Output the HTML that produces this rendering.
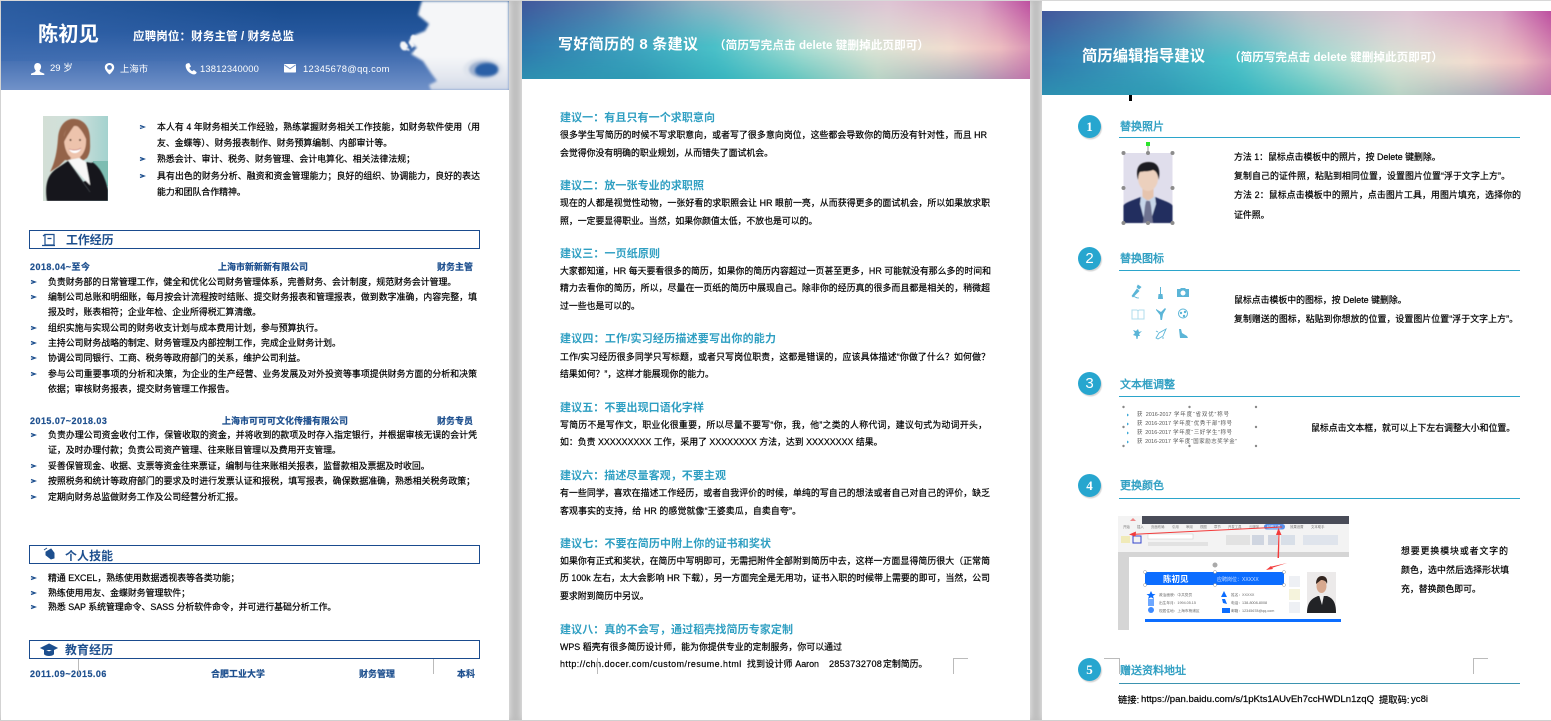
<!DOCTYPE html>
<html lang="zh-CN"><head><meta charset="utf-8"><title>简历</title>
<style>
html,body{margin:0;padding:0}
body{width:1551px;height:721px;overflow:hidden;background:#bdbdbd;position:relative;font-family:"Liberation Sans","Noto Sans CJK SC",sans-serif;font-size:8.9px;color:#000}
#w{position:absolute;left:0;top:0;width:1551px;height:721px;filter:blur(.3px)}
.pg{position:absolute;background:#fff;box-shadow:0 0 7px rgba(255,255,255,.75)}
.t{position:absolute;line-height:14px;height:14px;white-space:nowrap;-webkit-text-stroke:.2px currentColor}
.j{text-align:justify;text-align-last:justify}
.b{color:#1d4f8e;font-weight:bold;font-size:8.95px;margin-top:1px}
.ls{letter-spacing:.5px}
.h{color:#2f9fc2;font-weight:bold;font-size:11px;margin-top:1px;-webkit-text-stroke:0}
.h3{color:#2f9fc2;font-size:11px;margin-top:1px;-webkit-text-stroke:.4px #2f9fc2}
.ar{position:absolute;left:0;top:0}
.box{position:absolute;left:29px;width:449px;border:1px solid #1a4b8e;height:17px}
.st{color:#1d4f8e;font-weight:bold;font-size:11.9px;-webkit-text-stroke:0}
.hg{position:absolute;overflow:hidden}
.hg i{position:absolute;inset:0;display:block}
.hg .m{background:linear-gradient(90deg,#2f78ad 0,#3b9fbd 20%,#4ac0c8 38%,#a5dcd2 55%,#d8e4d6 68%,#f0dccf 84%,#ecbcc0 94%,#d993b4 100%)}
.hg .u{background:linear-gradient(90deg,#41579b 0,#5679ab 16%,#8db0c2 34%,#c2c4cc 52%,#dec4d4 72%,#d79fc2 90%,#bd4fa0 100%);-webkit-mask-image:linear-gradient(#000,transparent 58%);mask-image:linear-gradient(#000,transparent 58%)}
.hg .d{background:linear-gradient(90deg,#2d8fb0 0,#2f9cb5 24%,#38b5bf 40%,#5cc4bf 52%,#b8d3c5 70%,#b0abb9 88%,#c073aa 100%);-webkit-mask-image:linear-gradient(transparent 62%,#000);mask-image:linear-gradient(transparent 62%,#000)}
.tt{color:#fff;font-weight:bold;-webkit-text-stroke:0}
.v{position:absolute;width:1px;background:#bbb}
.hl{position:absolute;height:1px;background:#bbb}
.n{position:absolute;width:23px;height:23px;border-radius:50%;background:#27a6cf;box-shadow:1px 1.5px 1px #d5d5d5;color:#fff;text-align:center;font:bold 13px/23px "Liberation Serif",serif}
.l{position:absolute;left:1119px;width:401px;height:1px;background:#2ba5cb}
.s{font-size:5.4px;color:#555;line-height:8px;height:8px;-webkit-text-stroke:0}
.cl{position:absolute;inset:0;filter:blur(1.2px)}
.cl b{position:absolute;display:block}
</style></head><body><div id="w">

<!-- page frames -->
<div class="pg" style="left:1px;top:1px;width:508px;height:719px"></div>
<div class="pg" style="left:522px;top:1px;width:508px;height:719px"></div>
<div class="pg" style="left:1042px;top:1px;width:509px;height:719px"></div>
<div style="position:absolute;left:0;top:0;width:1551px;height:1px;background:#d8d8d8"></div>
<div style="position:absolute;left:0;top:720px;width:1551px;height:1px;background:#d0d0d0"></div>

<!-- PAGE 1 header -->
<div style="position:absolute;left:1px;top:1px;width:508px;height:89px;overflow:hidden;background:linear-gradient(180deg,rgba(23,74,140,1) 0,rgba(36,86,156,.9) 35%,rgba(76,117,182,.9) 68%,#7192c9 100%),#2a5ca2">
<svg width="508" height="89" style="position:absolute;left:0;top:0">
<defs>
<filter id="c1" x="-20%" y="-20%" width="140%" height="140%" color-interpolation-filters="sRGB"><feTurbulence type="fractalNoise" baseFrequency=".07" numOctaves="4" seed="7" result="n"/><feDisplacementMap in="SourceGraphic" in2="n" scale="15" xChannelSelector="R" yChannelSelector="G"/><feGaussianBlur stdDeviation=".7"/></filter>
<linearGradient id="lt" x1="0" x2="1"><stop offset="0" stop-color="#3a6ab0" stop-opacity=".55"/><stop offset=".7" stop-color="#3a6ab0" stop-opacity="0"/></linearGradient>
</defs>
<rect width="400" height="60" fill="url(#lt)"/>
<g filter="url(#c1)">
<circle cx="404" cy="42" r="5" fill="#f4f5f8"/><circle cx="415" cy="38" r="4" fill="#f4f5f8"/><circle cx="417" cy="50" r="3.500" fill="#dde3ee"/>
</g>
</svg>
<div class="cl">
<b style="inset:0;background:linear-gradient(#f5f6f8 0,#f5f6f8 62%,#e3e7ef 85%,#cfd7e6 100%);clip-path:polygon(421px 0,508px 0,508px 89px,430px 89px,428px 84px,436px 80px,430px 72px,422px 60px,410px 53px,416px 47px,408px 40px,414px 34px,424px 30px,428px 23px,417px 14px,419px 6px)"></b>
<b style="left:462px;top:57px;width:40px;height:23px;border-radius:50%;background:#dfe4ed"></b>
<b style="left:468px;top:60px;width:30px;height:17px;border-radius:50%;background:#9fb2d0"></b>
<b style="left:474px;top:62px;width:23px;height:13px;border-radius:60% 50% 50% 40%;background:#2a5fa6"></b>
</div>
</div>
<div class="t tt" style="left:38px;top:23px;font-size:20.3px;line-height:24px;height:24px;width:61px">陈初见</div>
<div class="t tt j" style="left:133px;top:30px;width:161px;font-size:11.5px">应聘岗位：财务主管 / 财务总监</div>
<svg class="ar" width="520" height="100" fill="#fff">
<path d="M37.500 63c2.600 0 3.600 2 3.600 3.800 0 1.800-1 3-1.600 3.900l1 1.400 3.800 1.500V75H31v-1.400l3.800-1.500 1-1.400c-.7-.9-1.600-2.100-1.600-3.900 0-1.800 1-3.800 3.300-3.800z"/>
<path fill-rule="evenodd" d="M109.500 63c-2.700 0-4.700 1.900-4.700 4.400 0 3.200 4.700 7.100 4.700 7.100s4.700-3.900 4.700-7.100c0-2.500-2-4.400-4.700-4.400zm0 2a2.400 2.400 0 110 4.800 2.400 2.400 0 010-4.800z"/>
<path d="M187 63.500l2.200-.5 1.800 3.500-1.700 1.400c.6 1.500 1.500 2.600 2.900 3.400l1.700-1.300 2.800 2.300-.5 1.200c-1 1.200-3 1.100-5 .1-3-1.500-5-4-5.500-7-.2-1.500.1-2.600 1.300-3.100z"/>
<rect x="284" y="64" width="12" height="8.500" rx=".8"/>
<path d="M284.500 65l5.500 3.800 5.500-3.800" fill="none" stroke="#6f90c6" stroke-width="1"/>
</svg>
<div class="t" style="left:50px;top:62px;color:#fff;font-size:9.500px;width:22px;-webkit-text-stroke:0">29 岁</div>
<div class="t j" style="left:120px;top:62px;color:#fff;font-size:9.300px;width:28px;-webkit-text-stroke:0">上海市</div>
<div class="t" style="left:200px;top:62px;color:#fff;font-size:9.400px;letter-spacing:.15px;-webkit-text-stroke:0">13812340000</div>
<div class="t" style="left:303px;top:62px;color:#fff;font-size:9.400px;letter-spacing:.32px;-webkit-text-stroke:0">12345678@qq.com</div>

<!-- portrait -->
<svg style="position:absolute;left:43px;top:116px" width="65" height="85" viewBox="0 0 65 85">
<defs><linearGradient id="pb" x1="0" x2="1"><stop offset="0" stop-color="#d3dfd6"/><stop offset=".5" stop-color="#cfe0dc"/><stop offset="1" stop-color="#a4d2ce"/></linearGradient><filter id="sf"><feGaussianBlur stdDeviation=".4"/></filter></defs>
<rect width="65" height="85" fill="url(#pb)"/>
<rect x="50" y="45" width="15" height="25" fill="#7dbdb2"/>
<g filter="url(#sf)">
<path d="M7 56C12 46 14 36 15 22C16 8 24 2 32 3C42 4 47 12 47 24C47 30 48 36 44 42L38 46L22 44L16 50Z" fill="#94634a"/>
<path d="M21 22C21 13 27 10 33 10C40 11 44 17 43 26C43 36 37 43 32 43C26 43 21 34 21 22Z" fill="#edc3ac"/>
<path d="M21 26C20 17 24 9 33 7C29 13 25 18 22 24ZM33 7C39 9 43 15 44 26C42 19 38 13 33 9Z" fill="#94634a"/>
<path d="M26 33C29 35 35 35 38 32C37 38 28 39 26 33Z" fill="#fff"/>
<path d="M26 33C29 34.500 35 34.500 38 32" stroke="#c06a6a" stroke-width=".6" fill="none"/>
<circle cx="27.500" cy="24" r="1" fill="#4a3026"/><circle cx="37" cy="24" r="1" fill="#4a3026"/>
<path d="M27 42L37 41L47 68L41 62Z" fill="#e8c0a8"/>
<path d="M4 85C2 72 3 60 13 53L25 45L40 66L49 62V46C56 50 62 60 65 74V85Z" fill="#17181b"/>
<path d="M25 44L36 42L43 46L48 70L40 62Z" fill="#f7f7f7"/>
<path d="M43 46L49 47L55 56L48 74L46 62Z" fill="#17181b"/>
<path d="M25 45L47 76" stroke="#3a3c42" stroke-width=".8" fill="none"/>
</g>
</svg>

<!-- chevrons p1 -->
<svg class="ar" width="520" height="721" fill="none" stroke="#1d4f8e" stroke-width="1.400">
<path d="M140 125.500l4 1.500-4 1.500M140 157.500l4 1.500-4 1.500M140 174.500l4 1.500-4 1.500"/>
<path d="M31 280.500l4 1.500-4 1.500M31 295.500l4 1.500-4 1.500M31 326.500l4 1.500-4 1.500M31 341.500l4 1.500-4 1.500M31 356.500l4 1.500-4 1.500M31 372.500l4 1.500-4 1.500M31 433.500l4 1.500-4 1.500M31 464.500l4 1.500-4 1.500M31 479.500l4 1.500-4 1.500M31 495.500l4 1.500-4 1.500M31 576.500l4 1.500-4 1.500M31 591.500l4 1.500-4 1.500M31 605.500l4 1.500-4 1.500"/>
</svg>

<div class="t j" style="left:157px;top:120px;width:323px">本人有 4 年财务相关工作经验，熟练掌握财务相关工作技能，如财务软件使用（用</div>
<div class="t j" style="left:157px;top:136px;width:234px">友、金蝶等）、财务报表制作、财务预算编制、内部审计等。</div>
<div class="t j" style="left:157px;top:152px;width:258px">熟悉会计、审计、税务、财务管理、会计电算化、相关法律法规；</div>
<div class="t j" style="left:157px;top:169px;width:323px">具有出色的财务分析、融资和资金管理能力；良好的组织、协调能力，良好的表达</div>
<div class="t j" style="left:157px;top:185px;width:85px">能力和团队合作精神。</div>

<!-- section 1 -->
<div class="box" style="top:230px"></div>
<svg class="ar" width="520" height="721" fill="none" stroke="#1d4f8e">
<path d="M45 234.500h9v10.500H45zM42 245.500h13M47.500 238.500h4M43 236l2-1.500" stroke-width="1.200"/>
<path d="M46 552l5-3 3 4v5l-3 1-5-4zM44 550l3-2" fill="#1d4f8e" stroke-width="1"/>
<path d="M49 644l8 4-8 4-8-4zM44.500 650v4c2 2 7 2 9 0v-4" fill="#1d4f8e" stroke-width="1"/>
</svg>
<div class="t st j" style="left:66px;top:233px;width:47px">工作经历</div>

<div class="t b ls" style="left:30px;top:259px">2018.04~至今</div>
<div class="t b j" style="left:218px;top:259px;width:90px">上海市新新新有限公司</div>
<div class="t b j" style="left:437px;top:259px;width:36px">财务主管</div>

<div class="t j" style="left:48px;top:275px;width:408px">负责财务部的日常管理工作，健全和优化公司财务管理体系，完善财务、会计制度，规范财务会计管理。</div>
<div class="t j" style="left:48px;top:290px;width:429px">编制公司总账和明细账，每月按会计流程按时结账、提交财务报表和管理报表，做到数字准确，内容完整，填</div>
<div class="t j" style="left:48px;top:305px;width:211px">报及时，账表相符；企业年检、企业所得税汇算清缴。</div>
<div class="t j" style="left:48px;top:321px;width:272px">组织实施与实现公司的财务收支计划与成本费用计划，参与预算执行。</div>
<div class="t j" style="left:48px;top:336px;width:290px">主持公司财务战略的制定、财务管理及内部控制工作，完成企业财务计划。</div>
<div class="t j" style="left:48px;top:351px;width:255px">协调公司同银行、工商、税务等政府部门的关系，维护公司利益。</div>
<div class="t j" style="left:48px;top:367px;width:429px">参与公司重要事项的分析和决策，为企业的生产经营、业务发展及对外投资等事项提供财务方面的分析和决策</div>
<div class="t j" style="left:48px;top:382px;width:184px">依据；审核财务报表，提交财务管理工作报告。</div>

<div class="t b ls" style="left:30px;top:413px">2015.07~2018.03</div>
<div class="t b j" style="left:222px;top:413px;width:126px">上海市可可可文化传播有限公司</div>
<div class="t b j" style="left:437px;top:413px;width:36px">财务专员</div>

<div class="t j" style="left:48px;top:428px;width:429px">负责办理公司资金收付工作，保管收取的资金，并将收到的款项及时存入指定银行，并根据审核无误的会计凭</div>
<div class="t j" style="left:48px;top:443px;width:290px">证，及时办理付款；负责公司资产管理、往来账目管理以及费用开支管理。</div>
<div class="t j" style="left:48px;top:459px;width:380px">妥善保管现金、收据、支票等资金往来票证，编制与往来账相关报表，监督款相及票据及时收回。</div>
<div class="t j" style="left:48px;top:474px;width:427px">按照税务和统计等政府部门的要求及时进行发票认证和报税，填写报表，确保数据准确，熟悉相关税务政策；</div>
<div class="t j" style="left:48px;top:490px;width:192px">定期向财务总监做财务工作及公司经营分析汇报。</div>

<div class="box" style="top:545px"></div>
<div class="t st j" style="left:65px;top:549px;width:48px">个人技能</div>
<div class="t j" style="left:48px;top:571px;width:187px">精通 EXCEL，熟练使用数据透视表等各类功能；</div>
<div class="t j" style="left:48px;top:586px;width:141px">熟练使用用友、金蝶财务管理软件；</div>
<div class="t j" style="left:48px;top:600px;width:282px">熟悉 SAP 系统管理命令、SASS 分析软件命令，并可进行基础分析工作。</div>

<div class="box" style="top:640px"></div>
<div class="t st j" style="left:65px;top:643px;width:48px">教育经历</div>
<div class="t b ls" style="left:30px;top:666px">2011.09~2015.06</div>
<div class="t b j" style="left:211px;top:666px;width:54px">合肥工业大学</div>
<div class="t b j" style="left:359px;top:666px;width:36px">财务管理</div>
<div class="t b j" style="left:457px;top:666px;width:18px">本科</div>
<div class="v" style="left:78px;top:659px;height:15px"></div>
<div class="v" style="left:433px;top:659px;height:15px"></div>

<!-- PAGE 2 -->
<div class="hg" style="left:522px;top:1px;width:508px;height:78px"><i class="m"></i><i class="u"></i><i class="d"></i></div>
<div class="t tt j" style="left:558px;top:38px;width:140px;font-size:15px">写好简历的 8 条建议</div>
<div class="t tt j" style="left:714px;top:39px;width:215px;font-size:11.600px">（简历写完点击 delete 键删掉此页即可）</div>

<div class="t h j" style="left:560px;top:110px;width:155px">建议一：有且只有一个求职意向</div>
<div class="t j" style="left:560px;top:128px;width:427px">很多学生写简历的时候不写求职意向，或者写了很多意向岗位，这些都会导致你的简历没有针对性，而且 HR</div>
<div class="t j" style="left:560px;top:146px;width:210px">会觉得你没有明确的职业规划，从而错失了面试机会。</div>

<div class="t h j" style="left:560px;top:178px;width:144px">建议二：放一张专业的求职照</div>
<div class="t j" style="left:560px;top:196px;width:430px">现在的人都是视觉性动物，一张好看的求职照会让 HR 眼前一亮，从而获得更多的面试机会，所以如果放求职</div>
<div class="t j" style="left:560px;top:214px;width:254px">照，一定要显得职业。当然，如果你颜值太低，不放也是可以的。</div>

<div class="t h j" style="left:560px;top:246px;width:100px">建议三：一页纸原则</div>
<div class="t j" style="left:560px;top:264px;width:431px">大家都知道，HR 每天要看很多的简历，如果你的简历内容超过一页甚至更多，HR 可能就没有那么多的时间和</div>
<div class="t j" style="left:560px;top:281px;width:430px">精力去看你的简历，所以，尽量在一页纸的简历中展现自己。除非你的经历真的很多而且都是相关的，稍微超</div>
<div class="t j" style="left:560px;top:299px;width:77px">过一些也是可以的。</div>

<div class="t h j" style="left:560px;top:331px;width:216px">建议四：工作/实习经历描述要写出你的能力</div>
<div class="t j" style="left:560px;top:350px;width:430px">工作/实习经历很多同学只写标题，或者只写岗位职责，这都是错误的，应该具体描述“你做了什么？如何做？</div>
<div class="t j" style="left:560px;top:367px;width:153px">结果如何？”，这样才能展现你的能力。</div>

<div class="t h j" style="left:560px;top:400px;width:144px">建议五：不要出现口语化字样</div>
<div class="t j" style="left:560px;top:418px;width:427px">写简历不是写作文，职业化很重要，所以尽量不要写“你，我，他”之类的人称代词，建议句式为动词开头，</div>
<div class="t j" style="left:560px;top:435px;width:315px">如：负责 XXXXXXXXX 工作，采用了 XXXXXXXX 方法，达到 XXXXXXXX 结果。</div>

<div class="t h j" style="left:560px;top:468px;width:166px">建议六：描述尽量客观，不要主观</div>
<div class="t j" style="left:560px;top:486px;width:430px">有一些同学，喜欢在描述工作经历，或者自我评价的时候，单纯的写自己的想法或者自己对自己的评价，缺乏</div>
<div class="t j" style="left:560px;top:504px;width:241px">客观事实的支持，给 HR 的感觉就像“王婆卖瓜，自卖自夸”。</div>

<div class="t h j" style="left:560px;top:536px;width:211px">建议七：不要在简历中附上你的证书和奖状</div>
<div class="t j" style="left:560px;top:554px;width:430px">如果你有正式和奖状，在简历中写明即可，无需把附件全部附到简历中去，这样一方面显得简历很大（正常简</div>
<div class="t j" style="left:560px;top:571px;width:430px">历 100k 左右，太大会影响 HR 下载），另一方面完全是无用功，证书入职的时候带上需要的即可，当然，公司</div>
<div class="t j" style="left:560px;top:589px;width:85px">要求附到简历中另议。</div>

<div class="t h j" style="left:560px;top:622px;width:233px">建议八：真的不会写，通过稻壳找简历专家定制</div>
<div class="t j" style="left:560px;top:640px;width:282px">WPS 稻壳有很多简历设计师，能为你提供专业的定制服务，你可以通过</div>
<div class="t" style="left:560px;top:657px;letter-spacing:.5px">http://chn.docer.com/custom/resume.html</div>
<div class="t j" style="left:747px;top:657px;width:72px">找到设计师 Aaron</div>
<div class="t" style="left:829px;top:657px;letter-spacing:.2px;font-size:9.200px">2853732708</div>
<div class="t j" style="left:883px;top:657px;width:41px">定制简历。</div>
<div class="v" style="left:597px;top:658px;height:16px"></div>
<div class="v" style="left:953px;top:658px;height:16px"></div>
<div class="hl" style="left:953px;top:658px;width:15px"></div>

<!-- PAGE 3 -->
<div class="hg" style="left:1042px;top:11px;width:509px;height:84px"><i class="m"></i><i class="u"></i><i class="d"></i></div>
<div style="position:absolute;left:1129px;top:95px;width:3px;height:6px;background:#000"></div>
<div class="t tt j" style="left:1082px;top:50px;width:123px;font-size:15.300px">简历编辑指导建议</div>
<div class="t tt j" style="left:1229px;top:51px;width:214px;font-size:11.600px">（简历写完点击 delete 键删掉此页即可）</div>

<div class="n" style="left:1078px;top:115px">1</div>
<div class="t h3 j" style="left:1120px;top:119px;width:44px">替换照片</div>
<div class="l" style="top:137px"></div>

<svg style="position:absolute;left:1118px;top:138px" width="60" height="92" viewBox="0 0 60 92">
<rect x="5.500" y="15" width="49" height="70" fill="#e0deec"/>
<g filter="url(#sf)">
<rect x="24.500" y="50" width="11" height="12" fill="#e6c4ae"/>
<ellipse cx="30" cy="40" rx="10" ry="13" fill="#ecd0bd"/>
<path d="M20 42C17 30 21 24 31 24C40 24 43 31 40.500 42C40 36 38 33 35 32C30 34 25 33 22 34C20.500 36 20.500 39 20 42Z" fill="#1f1d22"/>
<path d="M5.500 85V68c0-3 10-6 17-9l8 4 7-4c6 3 17 6 17 9v17z" fill="#232f5e"/>
<path d="M23 58l7 5 7-5 1 8-6 19H27l-5-19z" fill="#c7d6ea"/>
<path d="M28 63h4l1 5 2 17H25l2-17z" fill="#6e7290"/>
</g>
<path d="M30 5v10" stroke="#999" stroke-width="1"/>
<rect x="28" y="4" width="4" height="4" fill="#2be32b"/>
<g fill="#8c8c8c"><circle cx="5.500" cy="15" r="2"/><circle cx="30" cy="15" r="2"/><circle cx="54.500" cy="15" r="2"/><circle cx="5.500" cy="50" r="2"/><circle cx="54.500" cy="50" r="2"/><circle cx="5.500" cy="85" r="2"/><circle cx="30" cy="85" r="2"/><circle cx="54.500" cy="85" r="2"/></g>
</svg>

<div class="t j" style="left:1234px;top:150px;width:205px">方法 1：鼠标点击模板中的照片，按 Delete 键删除。</div>
<div class="t j" style="left:1234px;top:169px;width:276px">复制自己的证件照，粘贴到相同位置，设置图片位置“浮于文字上方”。</div>
<div class="t j" style="left:1234px;top:188px;width:287px">方法 2：鼠标点击模板中的照片，点击图片工具，用图片填充，选择你的</div>
<div class="t j" style="left:1234px;top:208px;width:31px">证件照。</div>

<div class="n" style="left:1078px;top:247px;font-family:'Liberation Sans',sans-serif;font-weight:normal;font-size:15px">2</div>
<div class="t h3 j" style="left:1120px;top:251px;width:44px">替换图标</div>
<div class="l" style="top:270px"></div>

<svg class="ar" width="1551" height="721" fill="#4aaed3" stroke="none" opacity=".9">
<path d="M1132 296l5-7 2 2-6 6zM1138 285l3 2-2 2-2-2zM1133 296l4 2h2" stroke="#4aaed3" stroke-width=".7"/>
<path d="M1160 287h1v7h-1zM1158.500 294h4l.5 5h-5z"/>
<path d="M1177 289h3l1-1h4l1 1h3v8h-12z"/><circle cx="1183" cy="293" r="2.500" fill="#fff"/>
<path d="M1132 310h5l1 1 1-1h5v9h-12zM1138 311v8" fill="none" stroke="#a9daec" stroke-width="1"/>
<path d="M1156 309l5 3 4-4 1 1-3 5-1 6h-1.500l-.5-5-4-5z"/>
<circle cx="1183" cy="313.500" r="4.500" fill="none" stroke="#4aaed3" stroke-width="1"/><circle cx="1181" cy="313" r="1.200"/><circle cx="1185" cy="312" r="1.200"/><circle cx="1184" cy="316" r="1.200"/>
<path d="M1133 330l3 1 2-2 1 3 3-1-3 3 1 2-2 0-.5 3h-1l-.5-3-3-1 2-2z"/>
<path d="M1156 338l3-5 7-4-3 7-5 3zM1158 332l-2-1M1163 337l0 2" fill="none" stroke="#4aaed3" stroke-width=".9"/>
<path d="M1179 329l2 0 1 4 5 3 1 2h-8zM1180 333h-2" />
</svg>

<div class="t j" style="left:1234px;top:293px;width:169px">鼠标点击模板中的图标，按 Delete 键删除。</div>
<div class="t j" style="left:1234px;top:312px;width:284px">复制赠送的图标，粘贴到你想放的位置，设置图片位置“浮于文字上方”。</div>

<div class="n" style="left:1078px;top:372px;font-family:'Liberation Sans',sans-serif;font-weight:normal;font-size:15px">3</div>
<div class="t h3 j" style="left:1120px;top:377px;width:55px">文本框调整</div>
<div class="l" style="top:396px"></div>
<svg class="ar" width="1551" height="721" fill="#888">
<circle cx="1123.500" cy="407" r="1.200"/><circle cx="1189.500" cy="407" r="1.200"/><circle cx="1256" cy="407" r="1.200"/>
<circle cx="1123.500" cy="427" r="1.200"/><circle cx="1256" cy="427" r="1.200"/>
<circle cx="1123.500" cy="446" r="1.200"/><circle cx="1189.500" cy="446" r="1.200"/><circle cx="1256" cy="446" r="1.200"/>
<g fill="#3aa7d6"><path d="M1127 413.500l2 1.500-2 1.500zM1127 422.500l2 1.500-2 1.500zM1127 431.500l2 1.500-2 1.500zM1127 440.500l2 1.500-2 1.500z"/></g>
</svg>
<div class="t s j" style="left:1137px;top:411px;width:92px">获 2016-2017 学年度“省双优”称号</div>
<div class="t s j" style="left:1137px;top:420px;width:95px">获 2016-2017 学年度“优秀干部”称号</div>
<div class="t s j" style="left:1137px;top:429px;width:95px">获 2016-2017 学年度“三好学生”称号</div>
<div class="t s j" style="left:1137px;top:438px;width:100px">获 2016-2017 学年度“国家励志奖学金”</div>
<div class="t j" style="left:1311px;top:421px;width:202px">鼠标点击文本框，就可以上下左右调整大小和位置。</div>

<div class="n" style="left:1078px;top:474px">4</div>
<div class="t h3 j" style="left:1120px;top:478px;width:44px">更换颜色</div>
<div class="l" style="top:498px"></div>

<svg style="position:absolute;left:1118px;top:516px;font-family:'Liberation Sans','Noto Sans CJK SC',sans-serif" width="231" height="114" viewBox="0 0 231 114">
<rect width="231" height="114" fill="#d5d5d5"/>
<rect width="231" height="36" fill="#f3f3f3"/>
<rect x="24" width="207" height="8" fill="#494c58"/>
<path d="M12 5l3-3 3 3z" fill="#e88"/>
<g font-size="3.400" fill="#777"><text x="5" y="12">开始</text><text x="19" y="12">插入</text><text x="33" y="12">页面布局</text><text x="54" y="12">引用</text><text x="68" y="12">审阅</text><text x="82" y="12">视图</text><text x="96" y="12">章节</text><text x="110" y="12">开发工具</text><text x="131" y="12">云服务</text><text x="172" y="12">效果设置</text><text x="193" y="12">文本助手</text></g>
<rect x="146" y="8" width="21" height="5.500" rx="2.700" fill="#5a8fe8"/>
<text x="149" y="12" font-size="3.400" fill="#fff">绘图工具</text>
<rect x="3" y="20" width="9" height="7" fill="#f0eab8"/>
<rect x="15" y="20" width="8" height="7" fill="none" stroke="#3344cc" stroke-width="1"/>
<rect x="30" y="18" width="45" height="5" fill="#fff" stroke="#ccc" stroke-width=".5"/>
<g fill="#e2e2e2"><rect x="30" y="26" width="60" height="4"/><rect x="108" y="19" width="24" height="10"/><rect x="134" y="19" width="12" height="10" fill="#cfd5e0"/><rect x="150" y="19" width="10" height="10" fill="#cfd5e0"/><rect x="163" y="19" width="14" height="10" fill="#d8dfe8"/><rect x="185" y="19" width="35" height="10" fill="#dfe4ec"/></g>
<rect x="11" y="41" width="220" height="73" fill="#fff"/>
<rect x="27" y="56" width="139" height="13" fill="#0c6dff"/>
<text x="45" y="66" font-size="8.500" font-weight="bold" fill="#fff">陈初见</text>
<text x="99" y="65" font-size="5" fill="#cfe0ff">应聘岗位：XXXXX</text>
<g fill="#fff" stroke="#999" stroke-width=".5"><circle cx="27" cy="56" r="1.500"/><circle cx="97" cy="56" r="1.500"/><circle cx="166" cy="56" r="1.500"/><circle cx="27" cy="69" r="1.500"/><circle cx="97" cy="69" r="1.500"/><circle cx="166" cy="69" r="1.500"/></g>
<circle cx="97" cy="49" r="2.500" fill="#aaa"/>
<rect x="171" y="60" width="11" height="11" fill="#eef0f4"/><rect x="171" y="73" width="11" height="11" fill="#f5f3dc"/><rect x="171" y="86" width="11" height="11" fill="#eef0f4"/>
<g fill="#0c6dff"><path d="M33 75l1.500 3h3l-2.500 2 1 3-3-1.700-3 1.700 1-3-2.500-2h3z"/><rect x="30" y="83" width="6" height="7" opacity=".6"/><circle cx="33" cy="94" r="3" opacity=".8"/><path d="M106 75l3 6h-6z"/><path d="M104 83l3 0 2 5-4-1z"/><rect x="104" y="92" width="8" height="5"/></g>
<g font-size="3.700" fill="#666"><text x="41" y="80">政治面貌：中共党员</text><text x="41" y="88">出生年月：1994.05.15</text><text x="41" y="96">现居住地：上海市杨浦区</text><text x="113" y="80">姓名：XXXXX</text><text x="113" y="88">电话：138-8008-8008</text><text x="113" y="96">邮箱：12345678@qq.com</text></g>
<rect x="189" y="56" width="29" height="41" fill="#eceaea"/>
<path d="M189 97c0-12 6-15 11-17l4 0 5 0c5 2 9 5 9 17z" fill="#222326"/>
<ellipse cx="203.500" cy="70" rx="5" ry="7" fill="#d7a88e"/>
<path d="M198 68c0-6 3-8 6-8s6 2 5 8c-1-3-3-4-6-4z" fill="#33251f"/>
<path d="M201 79h5l-2 10z" fill="#eee"/>
<rect x="27" y="103" width="196" height="3" fill="#0c6dff"/>
<g fill="#f33b3b"><path d="M12 18L164 10.500l.2 1L12.500 19z"/><path d="M11 18.500l7-3-.5 5z"/><path d="M159.500 42L160.500 17h1L161 42z"/><path d="M160.500 12l-2.500 7h5.500z"/><path d="M169 47L152 52.500l-.5-1.500z"/><path d="M148 54l5-4 2 3z"/></g>
</svg>

<div class="t j" style="left:1401px;top:544px;width:107px">想要更换模块或者文字的</div>
<div class="t j" style="left:1401px;top:563px;width:108px">颜色，选中然后选择形状填</div>
<div class="t j" style="left:1401px;top:582px;width:76px">充，替换颜色即可。</div>

<div class="n" style="left:1078px;top:658px">5</div>
<div class="t h3 j" style="left:1120px;top:663px;width:66px">赠送资料地址</div>
<div class="l" style="top:683px;background:#3b93b0"></div>
<div class="t" style="left:1118px;top:693px;font-size:9.300px">链接:</div>
<div class="t" style="left:1141px;top:693px;font-size:9.600px">https://pan.baidu.com/s/1pKts1AUvEh7ccHWDLn1zqQ</div>
<div class="t" style="left:1379px;top:693px;font-size:9.300px">提取码:</div>
<div class="t" style="left:1411px;top:693px;font-size:9.600px">yc8i</div>
<div class="v" style="left:1119px;top:658px;height:16px"></div>
<div class="hl" style="left:1104px;top:658px;width:15px"></div>
<div class="v" style="left:1473px;top:658px;height:16px"></div>
<div class="hl" style="left:1473px;top:658px;width:15px"></div>
</div></body></html>
